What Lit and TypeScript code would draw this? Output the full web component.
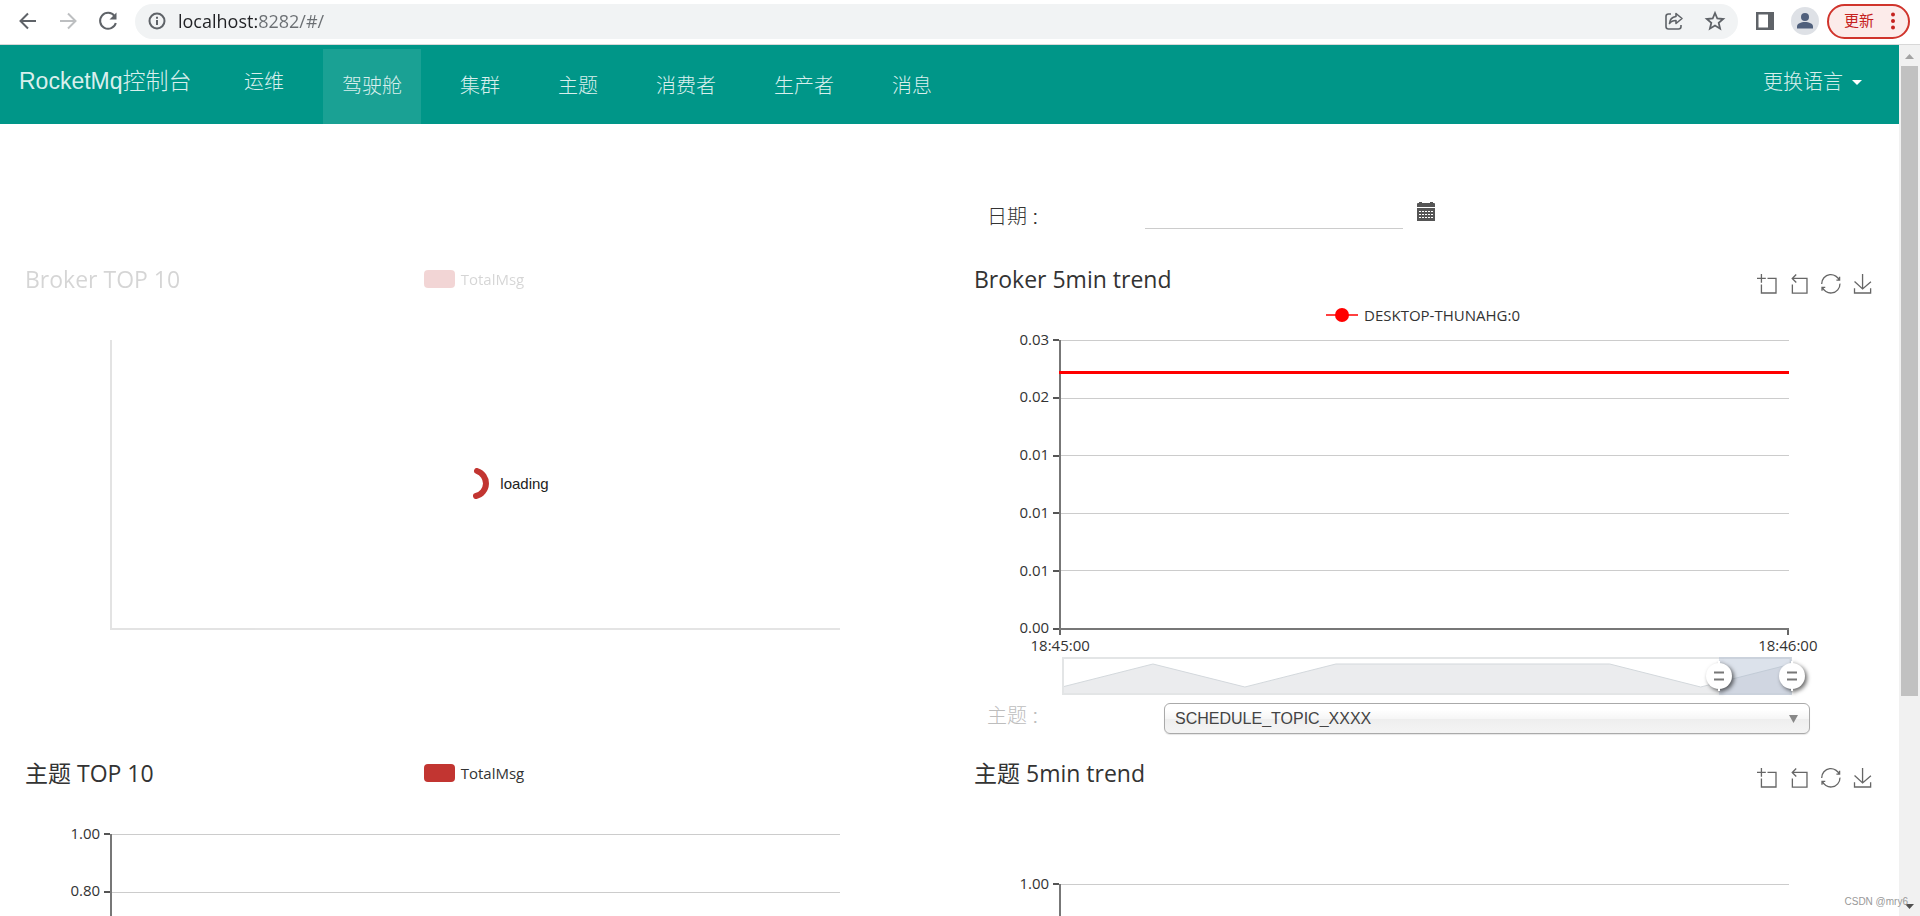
import { LitElement, html, css, nothing } from "lit";
import { customElement, property } from "lit/decorators.js";

const TOOL_ICONS = [
  { name: "区域缩放", d: "M0,13.5h26.9 M13.5,26.9V0 M32.1,13.5H58V58H13.5 V32.1" },
  { name: "区域缩放还原", d: "M22,1.4L9.9,13.5l12.3,12.3 M10.3,13.5H54.9v44.6 H10.3v-26" },
  {
    name: "还原",
    d: "M47,18.9h9.8V8.7 M56.3,20.1 C52.1,9,40.5,0.6,26.8,2.1C12.6,3.7,1.6,16.2,2.1,30.6 M13,41.1H3.1v10.2 M3.7,39.9c4.2,11.1,15.8,19.5,29.5,18 c14.2-1.6,25.2-14.1,24.7-28.5",
  },
  { name: "保存为图片", d: "M4.7,22.9L29.3,45.5L54.7,23.4M4.6,43.6L4.6,58L53.8,58L53.8,43.6M29.2,45.1L29.2,0" },
];

/* Browser toolbar */
@customElement("browser-bar")
class BrowserBar extends LitElement {
  static styles = css`
    :host {
      display: flex;
      align-items: center;
      height: 45px;
      padding: 0 10px 2px 16px;
      border-bottom: 1px solid #d8d8d8;
      background: #fff;
      box-sizing: border-box;
      flex: none;
    }
    button {
      border: 0;
      padding: 0;
      background: none;
      display: flex;
      align-items: center;
      justify-content: center;
      color: #5f6368;
      flex: none;
    }
    .tool {
      width: 24px;
      height: 24px;
    }
    .history {
      display: flex;
      gap: 16px;
    }
    .off {
      color: #bdbfc1;
    }
    .address {
      flex: 1;
      display: flex;
      align-items: center;
      height: 35px;
      border-radius: 18px;
      background: #f1f3f4;
      margin-left: 15px;
      padding: 0 11px 0 10px;
      gap: 17px;
    }
    .url {
      flex: 1;
      min-width: 0;
      border: 0;
      outline: 0;
      padding: 0;
      margin-left: -8px;
      height: 28px;
      font: 18px "Open Sans", "Noto Sans", sans-serif;
      background: linear-gradient(90deg, #202124 80px, #6a6e72 80px);
      -webkit-background-clip: text;
      background-clip: text;
      -webkit-text-fill-color: transparent;
    }
    .side {
      margin-left: 15px;
    }
    .avatar {
      width: 28px;
      height: 28px;
      border-radius: 50%;
      background: #dee1e6;
      color: #50607c;
      margin: 0 8px 0 14px;
    }
    .update {
      height: 35px;
      padding: 0 8px 0 15px;
      gap: 12px;
      border: 2px solid #d0342c;
      border-radius: 18px;
      background: #fcebea;
      color: #c5221f;
      font: 15px/22px "Noto Sans CJK SC", sans-serif;
    }
    .update span {
      padding-bottom: 2px;
    }
  `;
  render() {
    return html`
      <div class="history">
        <button class="tool" aria-label="后退">
          <svg width="24" height="24" viewBox="0 0 24 24" fill="none" stroke="currentColor" stroke-width="2">
            <path d="M20 12H4.500M12 4.500L4.500 12l7.500 7.500" />
          </svg>
        </button>
        <button class="tool off" aria-label="前进">
          <svg width="24" height="24" viewBox="0 0 24 24" fill="none" stroke="currentColor" stroke-width="2">
            <path d="M4 12h15.500M12 4.500l7.500 7.500-7.500 7.500" />
          </svg>
        </button>
        <button class="tool" aria-label="重新加载">
          <svg width="24" height="24" viewBox="0 0 24 24" fill="none" stroke="currentColor" stroke-width="2">
            <path d="M18.500 7A8 8 0 1 0 19.800 14" />
            <path d="M20.500 3.500v7h-7z" fill="currentColor" stroke="none" />
          </svg>
        </button>
      </div>
      <div class="address">
        <button class="tool" aria-label="网站信息">
          <svg width="20" height="20" viewBox="0 0 20 20" fill="none" stroke="currentColor" stroke-width="2">
            <circle cx="10" cy="10" r="7.500" />
            <path d="M10 9v5M10 5.700v2" />
          </svg>
        </button>
        <input class="url" type="text" aria-label="地址" .value=${"localhost:8282/#/"} />
        <button class="tool" aria-label="分享">
          <svg width="22" height="22" viewBox="0 0 22 22" fill="none" stroke="currentColor" stroke-width="1.600">
            <path d="M8 4H5.500A2.500 2.500 0 0 0 3 6.500v10A2.500 2.500 0 0 0 5.500 19h10a2.500 2.500 0 0 0 2.500-2.500V15" />
            <path stroke-linejoin="round" d="M13 3.500l6 5-6 5v-3c-3 0-5 .800-6.500 3 .300-4 2.500-6.500 6.500-7z" />
          </svg>
        </button>
        <button class="tool" aria-label="添加书签">
          <svg width="22" height="22" viewBox="0 0 22 22" fill="none" stroke="currentColor" stroke-width="1.800">
            <path d="M11 3l2.300 5.500 5.900.500-4.500 3.900 1.400 5.800L11 15.600l-5.100 3.100 1.400-5.800L2.800 9l5.900-.500z" />
          </svg>
        </button>
      </div>
      <button class="tool side" aria-label="侧边栏">
        <svg width="18" height="18" viewBox="0 0 18 18">
          <path fill="currentColor" fill-rule="evenodd" d="M0 0h18v18H0zM2.500 2.500v13H12v-13z" />
        </svg>
      </button>
      <button class="avatar" aria-label="用户">
        <svg width="18" height="18" viewBox="0 0 18 18" fill="currentColor">
          <circle cx="9" cy="5" r="4" />
          <path d="M1 16.500v-2c0-3 4-4.500 8-4.500s8 1.500 8 4.500v2z" />
        </svg>
      </button>
      <button class="update">
        <span>更新</span>
        <svg width="14" height="18" viewBox="0 0 14 18" fill="currentColor">
          <circle cx="7" cy="2.500" r="2" /><circle cx="7" cy="9" r="2" /><circle cx="7" cy="15.500" r="2" />
        </svg>
      </button>
    `;
  }
}

/* Green application header */
@customElement("nav-bar")
class NavBar extends LitElement {
  static styles = css`
    :host {
      display: flex;
      height: 79px;
      padding: 0 37px 0 19px;
      box-sizing: border-box;
      background: #009688;
      font: 20px/28px "Liberation Sans", "Noto Sans CJK SC", sans-serif;
      font-weight: 300;
    }
    a {
      color: #d9efed;
      text-decoration: none;
      white-space: nowrap;
    }
    .brand {
      width: 206px;
      padding-top: 22px;
      font-size: 23px;
    }
    nav {
      display: flex;
      flex: 1;
      gap: 20px;
    }
    .item {
      margin-top: 4px;
      padding: 23px 19px 0;
    }
    .ops {
      margin-top: 0;
    }
    .active {
      background: #1aa194;
    }
    .lang {
      display: flex;
      align-items: center;
      gap: 9px;
      align-self: flex-start;
      margin-top: 23px;
      padding: 0;
      border: 0;
      background: none;
      color: #d9efed;
      font: inherit;
    }
    .caret {
      border: 5px solid transparent;
      border-top-color: #fff;
      border-bottom: 0;
    }
  `;
  render() {
    const tabs = ["驾驶舱", "集群", "主题", "消费者", "生产者", "消息"];
    return html`
      <a class="brand" href="#/">RocketMq控制台</a>
      <nav>
        <a class="item ops" href="#/ops">运维</a>
        ${tabs.map((t, i) => html`<a class="item ${i === 0 ? "active" : ""}" href="#/">${t}</a>`)}
      </nav>
      <button class="lang">更换语言 <span class="caret"></span></button>
    `;
  }
}

/* A chart: heading, legend, axes and optional overlays */
@customElement("chart-panel")
class ChartPanel extends LitElement {
  @property() heading = "";
  @property() legend = "";
  @property({ type: Array }) labels: string[] = [];
  @property({ type: Array }) times: string[] = [];
  @property({ type: Number }) level = 0;
  @property({ type: Boolean }) trend = false;
  @property({ type: Boolean }) busy = false;
  @property({ type: Boolean, reflect: true }) deep = false;

  static styles = css`
    :host {
      display: block;
      position: relative;
      color: #333;
      font: 15px/20px "Open Sans", "Noto Sans CJK SC", sans-serif;
    }
    .head {
      display: grid;
      grid-template-columns: 1fr auto 1fr;
      height: 76px;
      padding: 0 8px 0 6px;
      box-sizing: border-box;
    }
    .line .head {
      grid-template-columns: 1fr auto;
      grid-template-rows: 40px 1fr;
    }
    :host([deep]) .head {
      height: 126px;
    }
    h2 {
      margin: 0;
      font-size: 23px;
      line-height: 30px;
      font-weight: 400;
      white-space: nowrap;
    }
    .legend {
      display: flex;
      align-items: center;
      align-self: start;
      gap: 6px;
      height: 30px;
    }
    .line .legend {
      grid-column: 1 / -1;
      justify-self: center;
      height: 22px;
    }
    .swatch {
      width: 31px;
      height: 18px;
      border-radius: 4px;
      background: #c23531;
    }
    .tools {
      display: flex;
      gap: 13px;
      height: 38px;
      align-items: center;
    }
    .tools button {
      border: 0;
      padding: 0;
      background: none;
      width: 19px;
      height: 19px;
      color: #666;
    }
    .tools svg {
      display: block;
      overflow: visible;
    }
    .body {
      display: grid;
      grid-template-columns: 10% 1fr 10%;
      height: 290px;
    }
    .scale {
      display: flex;
      flex-direction: column;
      justify-content: space-between;
      margin: -10px 0 -9px;
    }
    .label {
      display: flex;
      align-items: center;
      justify-content: flex-end;
      height: 20px;
      gap: 4px;
    }
    .label span {
      padding-bottom: 3px;
    }
    .tick {
      width: 6px;
      height: 2px;
      background: #555;
    }
    .plot {
      position: relative;
      display: flex;
      flex-direction: column;
      justify-content: space-between;
      border-left: 2px solid #777;
      box-sizing: border-box;
    }
    .rule {
      height: 1px;
      background: #ccc;
    }
    .rule:last-child {
      height: 2px;
      background: #777;
    }
    .series {
      position: absolute;
      left: -2px;
      right: 0;
      height: 3px;
      background: #f00;
    }
    .times {
      display: flex;
      justify-content: space-between;
      padding: 0 10%;
      height: 27px;
    }
    .time {
      width: 2px;
      display: flex;
      flex-direction: column;
      align-items: center;
      line-height: 20px;
    }
    .time i {
      width: 2px;
      height: 5px;
      flex: none;
      background: #666;
    }
    .faded {
      opacity: 0.2;
    }
    .wait {
      position: absolute;
      inset: 0;
      height: 438px;
      padding-left: 72px;
      display: flex;
      align-items: center;
      justify-content: center;
      gap: 10px;
      font: 15px "Liberation Sans", sans-serif;
      color: #222;
    }
  `;

  render() {
    const axis = this.labels;
    return html`
      <div class="${this.trend ? "line" : ""} ${this.busy ? "faded" : ""}">
        <div class="head">
          <h2>${this.heading}</h2>
          ${this.trend
            ? html`<div class="tools">
                ${TOOL_ICONS.map(
                  (t) => html`<button aria-label=${t.name}>
                    <svg width="19" height="19" viewBox="0 0 58 58" fill="none" stroke="currentColor" stroke-width="4">
                      <path d=${t.d} />
                    </svg>
                  </button>`
                )}
              </div>`
            : nothing}
          ${this.legend
            ? html`<div class="legend">
                ${this.trend
                  ? html`<svg width="32" height="16" viewBox="0 0 32 16">
                      <path d="M0 8h32" stroke="#f00" stroke-width="1.500" />
                      <circle cx="16" cy="8" r="7" fill="#f00" />
                    </svg>`
                  : html`<span class="swatch"></span>`}
                <span>${this.legend}</span>
              </div>`
            : nothing}
        </div>
        <div class="body">
          <div class="scale">
            ${axis.map((l) => html`<div class="label"><span>${l}</span><i class="tick"></i></div>`)}
          </div>
          <div class="plot">
            ${this.level ? html`<div class="series" style="top:${this.level}%"></div>` : nothing}
            ${axis.length ? axis.map(() => html`<div class="rule"></div>`) : html`<i></i><div class="rule"></div>`}
          </div>
        </div>
        ${this.times.length
          ? html`<div class="times">
              ${this.times.map((t) => html`<div class="time"><i></i><span>${t}</span></div>`)}
            </div>`
          : nothing}
      </div>
      ${this.busy
        ? html`<div class="wait">
            <svg width="17" height="31" viewBox="0 0 17 31" fill="none">
              <path d="M4 3A13 13 0 0 1 3 28" stroke="#c23531" stroke-width="6" stroke-linecap="round" />
            </svg>
            loading
          </div>`
        : nothing}
    `;
  }
}

/* Range selector below the trend chart */
@customElement("zoom-slider")
class ZoomSlider extends LitElement {
  @property({ type: Number }) from = 90;
  @property({ type: Number }) to = 100;

  static styles = css`
    :host {
      display: block;
      position: relative;
      height: 38px;
      margin: 0 calc(10% - 3px) 0 calc(10% + 3px);
    }
    .shadow {
      display: block;
      width: 100%;
      height: 38px;
    }
    .window {
      position: absolute;
      top: 0;
      bottom: 0;
      background: rgba(167, 183, 204, 0.4);
    }
    .handle {
      position: absolute;
      top: 4px;
      width: 28px;
      height: 30px;
      margin-left: -14px;
      overflow: visible;
      filter: drop-shadow(2px 2px 2px rgba(0, 0, 0, 0.6));
    }
  `;
  render() {
    return html`
      <svg class="shadow" viewBox="0 0 730 38" preserveAspectRatio="none">
        <path d="M0 30L91 7 183 30 274 7H548L639 30 730 7V38H0z" fill="#ebecee" />
        <path d="M0 30L91 7 183 30 274 7H548L639 30 730 7" fill="none" stroke="#d3d8dc" />
        <rect x="1" y="1" width="728" height="36" fill="none" stroke="#e3e5e6" stroke-width="2" />
      </svg>
      <div class="window" style="left:${this.from}%;right:${100 - this.to}%"></div>
      ${[this.from, this.to].map(
        (p) => html`<svg class="handle" style="left:${p}%" viewBox="0 0 28 30">
          <circle cx="14" cy="15" r="13" fill="#fff" />
          <path d="M13 0h2v3h-2zM13 27h2v3h-2z" fill="#fff" />
          <path d="M9 11.500h10M9 18.500h10" stroke="#777" stroke-width="2" />
        </svg>`
      )}
    `;
  }
}

@customElement("app-root")
class AppRoot extends LitElement {
  static styles = css`
    :host {
      display: flex;
      flex-direction: column;
      height: 100vh;
      overflow: hidden;
      background: #fff;
      color: #333;
      font: 20px "Liberation Sans", "Noto Sans CJK SC", sans-serif;
    }
    .view {
      flex: 1;
      min-height: 0;
      display: flex;
    }
    .page {
      flex: 1;
      min-width: 0;
      overflow: hidden;
    }
    .board {
      display: grid;
      grid-template-columns: 1fr 1fr;
      grid-template-rows: 140px 494px auto;
      column-gap: 37px;
      padding: 0 19px;
    }
    .date {
      grid-column: 2;
      display: flex;
      align-items: flex-start;
      padding: 76px 0 0 19px;
      font-weight: 300;
    }
    .date label,
    .topic label {
      width: 158px;
      line-height: 34px;
    }
    .date input {
      width: 258px;
      height: 29px;
      box-sizing: border-box;
      border: 0;
      border-bottom: 1px solid #ccc;
      padding: 0;
      outline: 0;
      font: inherit;
    }
    .date button {
      border: 0;
      padding: 0;
      background: none;
      margin: 2px 0 0 14px;
      color: #555;
    }
    .date svg {
      display: block;
    }
    .topic {
      display: flex;
      align-items: flex-start;
      padding: 8px 70px 0 19px;
      color: #bdbdbd;
      font-weight: 300;
    }
    .topic label {
      width: 177px;
      line-height: 26px;
    }
    .pick {
      flex: 1;
      display: grid;
      align-items: center;
    }
    .pick select {
      grid-area: 1 / 1;
      appearance: none;
      height: 31px;
      padding: 0 30px 0 10px;
      border: 1px solid #aaa;
      border-radius: 6px;
      background: linear-gradient(#fff 20%, #f6f6f6 50%, #eee 52%, #f4f4f4 100%);
      box-shadow: 0 1px 1px rgba(0, 0, 0, 0.1);
      color: #444;
      font: 16px "Liberation Sans", sans-serif;
    }
    .pick svg {
      grid-area: 1 / 1;
      justify-self: end;
      margin-right: 12px;
      pointer-events: none;
    }
    .scroll {
      width: 21px;
      flex: none;
      display: flex;
      flex-direction: column;
      align-items: center;
      background: #f1f1f1;
    }
    .cap {
      height: 21px;
      width: 21px;
      flex: none;
      fill: #a3a3a3;
    }
    .down {
      fill: #505050;
    }
    .rail {
      flex: 1;
      width: 17px;
    }
    .thumb {
      height: 76%;
      background: #c1c1c1;
    }
    .mark {
      position: absolute;
      right: 12px;
      bottom: 8px;
      font-size: 10px;
      line-height: 12px;
      color: #999;
    }
  `;

  render() {
    return html`
      <browser-bar></browser-bar>
      <div class="view">
        <div class="page">
          <nav-bar></nav-bar>
          <main class="board">
            <div class="date">
              <label for="day">日期 :</label>
              <input id="day" type="text" />
              <button aria-label="选择日期">
                <svg width="18" height="19" viewBox="0 0 18 19">
                  <path fill="currentColor" d="M0 2q0-1 1-1h1V0h3v1h8V0h3v1h1q1 0 1 1v3H0zM0 6h18v13H0z" />
                  <path stroke="#fff" stroke-width="1.200" stroke-dasharray="2 1" d="M2 9.500h14M2 12.500h14M2 15.500h14" />
                </svg>
              </button>
            </div>
            <chart-panel heading="Broker TOP 10" legend="TotalMsg" busy></chart-panel>
            <section>
              <chart-panel
                trend
                heading="Broker 5min trend"
                legend="DESKTOP-THUNAHG:0"
                .labels=${["0.03", "0.02", "0.01", "0.01", "0.01", "0.00"]}
                .times=${["18:45:00", "18:46:00"]}
                .level=${10.8}
              ></chart-panel>
              <zoom-slider></zoom-slider>
              <div class="topic">
                <label for="topic">主题 :</label>
                <div class="pick">
                  <select id="topic">
                    <option>SCHEDULE_TOPIC_XXXX</option>
                  </select>
                  <svg width="9" height="8" viewBox="0 0 9 8"><path d="M0 0h9L4.500 8z" fill="#888" /></svg>
                </div>
              </div>
            </section>
            <chart-panel
              heading="主题 TOP 10"
              legend="TotalMsg"
              .labels=${["1.00", "0.80", "", "", "", ""]}
            ></chart-panel>
            <chart-panel
              trend
              deep
              heading="主题 5min trend"
              .labels=${["1.00", "", "", "", "", ""]}
            ></chart-panel>
          </main>
        </div>
        <div class="scroll">
          <svg class="cap" viewBox="0 0 21 21"><path d="M6 14h9l-4.500-5z" /></svg>
          <div class="rail"><div class="thumb"></div></div>
          <svg class="cap down" viewBox="0 0 21 21"><path d="M6 9h9l-4.500 5z" /></svg>
        </div>
      </div>
      <div class="mark">CSDN @mry6</div>
    `;
  }
}
